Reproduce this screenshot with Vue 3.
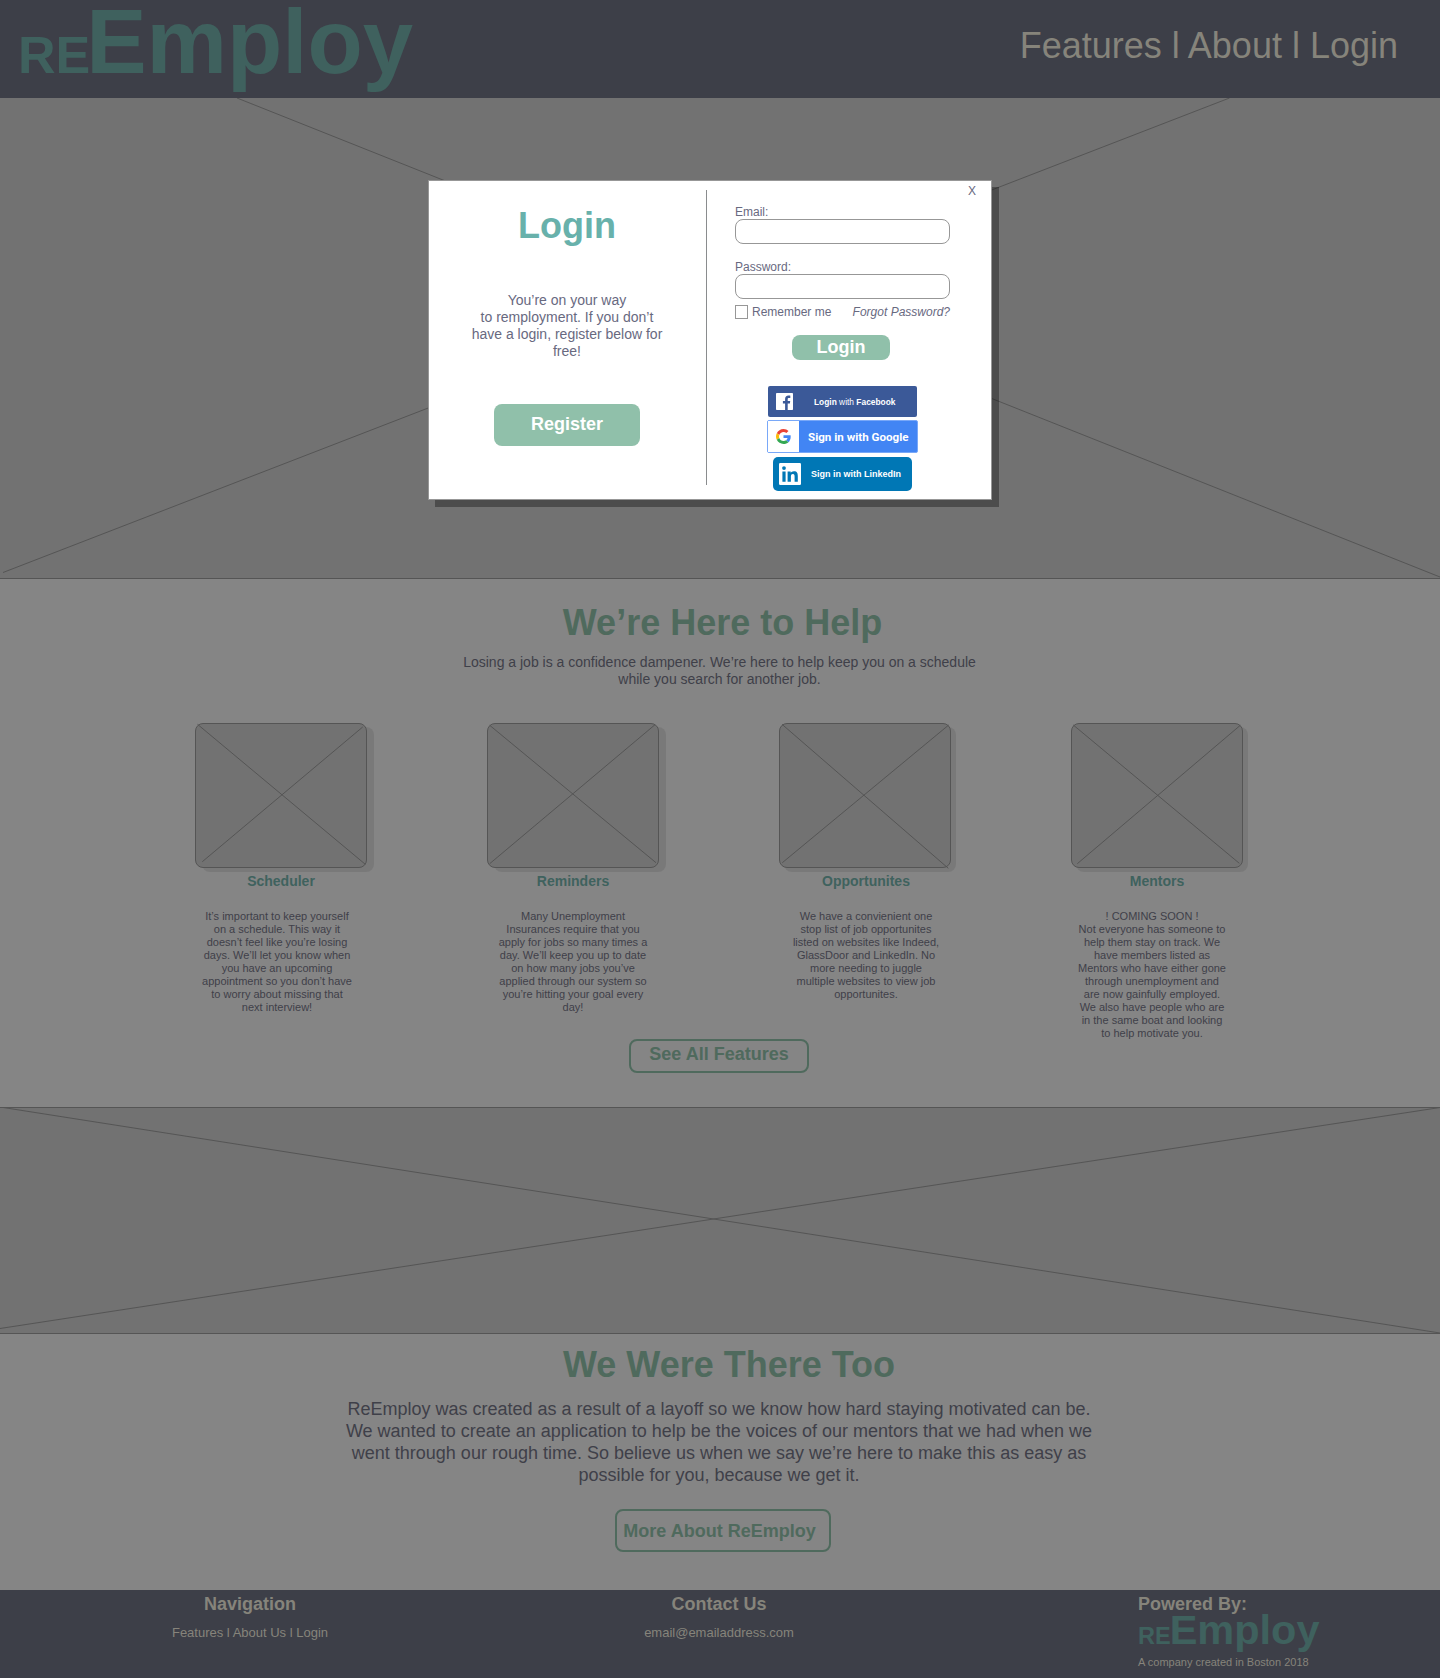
<script setup>
const features = [
  {
    title: 'Scheduler',
    shadow: 7,
    nudge: 0,
    shift: -4,
    cross: [[2.5, 1.3, 170.3, 141.3], [167.7, 4, 7.3, 138.7]],
    lines: [
      'It’s important to keep yourself',
      'on a schedule. This way it',
      'doesn’t feel like you’re losing',
      'days. We’ll let you know when',
      'you have an upcoming',
      'appointment so you don’t have',
      'to worry about missing that',
      'next interview!',
    ],
  },
  {
    title: 'Reminders',
    shadow: 7,
    nudge: 0,
    shift: 0,
    cross: [[2.7, 2.3, 169, 139.7], [168, 1.7, 2.7, 140.7]],
    lines: [
      'Many Unemployment',
      'Insurances require that you',
      'apply for jobs so many times a',
      'day. We’ll keep you up to date',
      'on how many jobs you’ve',
      'applied through our system so',
      'you’re hitting your goal every',
      'day!',
    ],
  },
  {
    title: 'Opportunites',
    shadow: 5,
    nudge: 1,
    shift: 1,
    cross: [[3, 1.3, 169.3, 145.3], [169.7, 2, 3.3, 139.7]],
    lines: [
      'We have a convienient one',
      'stop list of job opportunites',
      'listed on websites like Indeed,',
      'GlassDoor and LinkedIn. No',
      'more needing to juggle',
      'multiple websites to view job',
      'opportunites.',
    ],
  },
  {
    title: 'Mentors',
    shadow: 5,
    nudge: 0,
    shift: -5,
    cross: [[2.3, 2, 168.3, 140.3], [169.3, 2.3, 6.3, 140.7]],
    lines: [
      '! COMING SOON !',
      'Not everyone has someone to',
      'help them stay on track. We',
      'have members listed as',
      'Mentors who have either gone',
      'through unemployment and',
      'are now gainfully employed.',
      'We also have people who are',
      'in the same boat and looking',
      'to help motivate you.',
    ],
  },
]

const story = [
  'ReEmploy was created as a result of a layoff so we know how hard staying motivated can be.',
  'We wanted to create an application to help be the voices of our mentors that we had when we',
  'went through our rough time. So believe us when we say we’re here to make this as easy as',
  'possible for you, because we get it.',
]

const pitch = ['You’re on your way', 'to remployment. If you don’t', 'have a login, register below for', 'free!']
</script>

<template>
  <div class="page">
    <header class="top">
      <div class="logo"><span class="re">RE</span><span class="employ">Employ</span></div>
      <nav class="nav">Features l About l Login</nav>
    </header>

    <section class="hero">
      <svg width="1440" height="480" viewBox="0 0 1440 480">
        <path d="M237 0 L1440 479 M1229.5 0 L3 474.500" />
      </svg>
    </section>

    <section class="help">
      <h2>We’re Here to Help</h2>
      <p class="lead">
        <span>Losing a job is a confidence dampener. We’re here to help keep you on a schedule</span>
        <span>while you search for another job.</span>
      </p>
      <div class="cards">
        <article v-for="f in features" :key="f.title" class="card">
          <div class="thumb" :style="{ boxShadow: f.shadow + 'px 4px 0 #797979' }">
            <svg width="172" height="145" viewBox="0 0 172 145">
              <line v-for="(c, i) in f.cross" :key="i" :x1="c[0]" :y1="c[1]" :x2="c[2]" :y2="c[3]" />
            </svg>
          </div>
          <h3 :style="{ paddingLeft: f.nudge * 2 + 'px' }">{{ f.title }}</h3>
          <p :style="{ marginLeft: f.shift * 2 + 'px' }">
            <span v-for="l in f.lines" :key="l">{{ l }}</span>
          </p>
        </article>
      </div>
      <button class="outline see">See All Features</button>
    </section>

    <section class="band">
      <svg width="1440" height="225" viewBox="0 0 1440 225">
        <path d="M0 -1 L1440 225 M0 220.5 L1440 -0.5" />
      </svg>
    </section>

    <section class="about">
      <h2>We Were There Too</h2>
      <p class="story"><span v-for="l in story" :key="l">{{ l }}</span></p>
      <button class="outline more">More About ReEmploy</button>
    </section>

    <footer class="foot">
      <div class="col nav-col">
        <h4>Navigation</h4>
        <p>Features l About Us l Login</p>
      </div>
      <div class="col contact-col">
        <h4>Contact Us</h4>
        <p>email@emailaddress.com</p>
      </div>
      <div class="powered">
        <h4>Powered By:</h4>
        <div class="logo small"><span class="re">RE</span><span class="employ">Employ</span></div>
        <small>A company created in Boston 2018</small>
      </div>
    </footer>

    <div class="modal">
      <div class="intro">
        <h1>Login</h1>
        <p><span v-for="l in pitch" :key="l">{{ l }}</span></p>
        <button class="solid register">Register</button>
      </div>
      <div class="divider"></div>
      <form class="form" @submit.prevent>
        <div class="close">X</div>
        <label class="field">Email:<input type="text" /></label>
        <label class="field">Password:<input type="password" /></label>
        <div class="options">
          <span class="box"></span>
          <span class="remember">Remember me</span>
          <em>Forgot Password?</em>
        </div>
        <button class="solid submit">Login</button>

        <div class="social facebook">
          <svg width="17" height="17" viewBox="0 0 17 17">
            <rect width="17" height="17" rx="0.8" fill="#fff" />
            <path d="M9.1 17V10.4H6.9V7.9h2.2V6c0-2.2 1.3-3.4 3.3-3.4.9 0 1.7.1 1.9.1V5h-1.300c-1.100 0-1.300.5-1.300 1.200v1.700h2.500l-.3 2.500h-2.200V17z" fill="#3b5998" />
          </svg>
          <span class="label"><b>Login</b> with <b>Facebook</b></span>
        </div>

        <div class="social google">
          <div class="tile">
            <svg width="15" height="15" viewBox="0 0 48 48">
              <path fill="#EA4335" d="M24 9.500c3.540 0 6.710 1.220 9.210 3.600l6.850-6.850C35.900 2.380 30.470 0 24 0 14.620 0 6.510 5.380 2.560 13.220l7.980 6.190C12.430 13.720 17.740 9.500 24 9.500z" />
              <path fill="#4285F4" d="M46.980 24.550c0-1.570-.15-3.090-.38-4.550H24v9.020h12.940c-.58 2.960-2.260 5.480-4.780 7.180l7.730 6c4.510-4.180 7.090-10.360 7.090-17.650z" />
              <path fill="#FBBC05" d="M10.530 28.590c-.48-1.450-.76-2.990-.76-4.590s.27-3.140.76-4.590l-7.980-6.190C.92 16.460 0 20.120 0 24c0 3.880.92 7.540 2.560 10.780l7.970-6.190z" />
              <path fill="#34A853" d="M24 48c6.480 0 11.930-2.130 15.890-5.810l-7.730-6c-2.150 1.450-4.920 2.300-8.160 2.300-6.260 0-11.570-4.220-13.470-9.910l-7.980 6.190C6.510 42.620 14.620 48 24 48z" />
            </svg>
          </div>
          <span class="label">Sign in with Google</span>
        </div>

        <div class="social linkedin">
          <svg width="22" height="22" viewBox="0 0 22 22">
            <rect width="22" height="22" rx="1.200" fill="#fff" />
            <circle cx="5" cy="5.100" r="1.900" fill="#0077b5" />
            <path d="M3.400 8.400h3.200v10.400H3.400zM8.600 8.400h3.100v1.450c.5-.9 1.600-1.700 3.200-1.700 3.300 0 3.900 2.100 3.900 4.900v5.750h-3.200v-5.100c0-1.300 0-2.800-1.700-2.800s-2 1.300-2 2.700v5.200H8.600z" fill="#0077b5" />
          </svg>
          <span class="label">Sign in with LinkedIn</span>
        </div>
      </form>
    </div>
  </div>
</template>

<style>
body {
  background: #858585;
}
</style>

<style scoped>
.page {
  position: relative;
  width: 1440px;
  height: 1678px;
  overflow: hidden;
  background: #858585;
  color: #3f4049;
  font-family: 'Liberation Sans', Arial, Helvetica, sans-serif;
}
.page * {
  box-sizing: border-box;
}
h1, h2, h3, h4, p {
  margin: 0;
}
p span {
  display: block;
  white-space: nowrap;
}
button {
  padding: 0;
  font: bold 18px 'Liberation Sans', Arial, Helvetica, sans-serif;
}

/* header */
.top {
  display: flex;
  justify-content: space-between;
  height: 98px;
  padding: 0 42px 0 18px;
  background: #3d3f48;
}
.logo {
  display: flex;
  align-items: baseline;
  color: #3f615e;
  font-weight: bold;
  line-height: 83px;
  height: 83px;
}
.re {
  font-size: 52px;
  margin-right: -4px;
}
.employ {
  font-size: 90.500px;
}
.nav {
  color: #86847b;
  font-size: 36px;
  line-height: 92px;
}

/* placeholder images */
.hero {
  height: 481px;
  background: #727272;
  border-bottom: 1px solid #555;
}
.band {
  height: 227px;
  background: #727272;
  border: solid #555;
  border-width: 1px 0;
}
svg {
  display: block;
  flex: none;
}
.hero path, .band path, .thumb line {
  fill: none;
  stroke: #555;
  stroke-width: 1;
}

/* features */
.help {
  height: 528px;
  padding-top: 22px;
}
h2 {
  color: #4f6a5d;
  font-size: 36px;
  line-height: 44px;
  text-align: center;
}
.help h2 {
  padding-left: 5px;
}
.lead {
  margin-top: 9px;
  padding-right: 1px;
  font-size: 14px;
  line-height: 17px;
  text-align: center;
}
.cards {
  display: flex;
  gap: 120px;
  height: 316px;
  margin-top: 35px;
  padding-left: 195px;
}
.card {
  flex: none;
  width: 172px;
  text-align: center;
}
.thumb {
  height: 145px;
  background: #727272;
  border: 1px solid #555;
  border-radius: 8px;
}
.thumb svg {
  margin: -1px;
  overflow: visible;
}
h3 {
  margin-top: 5px;
  color: #3f625e;
  font-size: 14px;
  line-height: 17px;
}
.card p {
  margin-top: 20px;
  font-size: 11px;
  line-height: 13px;
}
.outline {
  display: block;
  border: 2px solid #4f6a5d;
  border-radius: 8px;
  background: transparent;
  color: #4f6a5d;
}
.see {
  width: 180px;
  height: 34px;
  margin-left: 629px;
  padding-bottom: 3px;
  line-height: 25px;
}

/* about */
.about {
  height: 256px;
  padding-top: 9px;
}
.about h2 {
  padding-left: 18px;
}
.story {
  margin-top: 11px;
  padding-right: 2px;
  font-size: 18px;
  line-height: 22px;
  text-align: center;
}
.more {
  width: 216px;
  height: 43px;
  margin: 23px 0 0 615px;
  padding: 1px 7px 0 0;
  line-height: 38px;
}

/* footer */
.foot {
  display: flex;
  height: 88px;
  padding-top: 3px;
  background: #3d3f48;
  color: #86847b;
}
h4 {
  font-size: 18px;
  line-height: 22px;
}
.col {
  width: 200px;
  text-align: center;
}
.col p {
  margin-top: 10px;
  font-size: 13px;
  line-height: 15px;
}
.nav-col {
  margin-left: 150px;
}
.contact-col {
  margin-left: 269px;
}
.powered {
  margin-left: 319px;
}
.small {
  height: 30px;
  line-height: 30px;
}
.small .re {
  font-size: 23.500px;
  margin-right: -1px;
}
.small .employ {
  font-size: 41.500px;
}
.powered small {
  display: block;
  margin-top: 11px;
  font-size: 11px;
  line-height: 13px;
}

/* login dialog */
.modal {
  position: absolute;
  left: 428px;
  top: 180px;
  display: flex;
  width: 564px;
  height: 320px;
  border: 1px solid #979797;
  background: #fff;
  box-shadow: 7px 7px 0 rgba(0, 0, 0, 0.33);
  color: #68697f;
}
.intro {
  display: flex;
  flex-direction: column;
  align-items: center;
  width: 277px;
  padding: 23px 1px 0 0;
}
h1 {
  color: #68b1ab;
  font-size: 36px;
  line-height: 44px;
}
.intro p {
  margin-top: 44px;
  font-size: 14px;
  line-height: 17px;
  text-align: center;
}
.solid {
  border: 0;
  border-radius: 8px;
  background: #90c0aa;
  color: #fff;
}
.register {
  width: 146px;
  height: 42px;
  margin-top: 44px;
  padding-bottom: 2px;
}
.divider {
  width: 1px;
  height: 295px;
  margin-top: 9px;
  background: #8a8c8e;
}
.form {
  width: 243px;
  padding-left: 28px;
  font-size: 12px;
}
.close {
  margin: 3px 0 0 233px;
  line-height: 14px;
}
.field {
  display: block;
  height: 55px;
  line-height: 14px;
}
.close + .field {
  margin-top: 7px;
}
input {
  display: block;
  width: 215px;
  height: 25px;
  border: 1px solid #979797;
  border-radius: 8px;
  background: #fff;
}
.options {
  display: flex;
  width: 215px;
  height: 14px;
  margin-top: -10px;
  line-height: 14px;
}
.box {
  width: 13px;
  height: 14px;
  border: 1px solid #979797;
}
.remember {
  margin-left: 4px;
}
.options em {
  margin-left: auto;
}
.submit {
  display: block;
  width: 98px;
  height: 25px;
  margin: 16px 0 0 57px;
}
.social {
  display: flex;
  align-items: center;
  color: #fff;
  white-space: nowrap;
}
.facebook {
  width: 149px;
  height: 31px;
  margin: 26px 0 0 33px;
  padding-left: 8px;
  border-radius: 2px;
  background: #3b5998;
  font-size: 8.400px;
}
.facebook .label {
  margin-left: 21px;
}
.google {
  width: 151px;
  height: 33px;
  margin: 3px 0 0 32px;
  border: 1px solid #79a8f8;
  border-radius: 2px;
  background: #4285f4;
  font: bold 11.600px Roboto, sans-serif;
}
.tile {
  display: flex;
  align-items: center;
  justify-content: center;
  width: 31px;
  height: 31px;
  background: #fff;
}
.google .label {
  margin-left: 9px;
}
.linkedin {
  width: 139px;
  height: 34px;
  margin: 4px 0 0 38px;
  padding-left: 6px;
  border-radius: 5px;
  background: #0077b5;
  font-size: 9px;
  font-weight: bold;
}
.linkedin .label {
  margin-left: 10px;
}
</style>
